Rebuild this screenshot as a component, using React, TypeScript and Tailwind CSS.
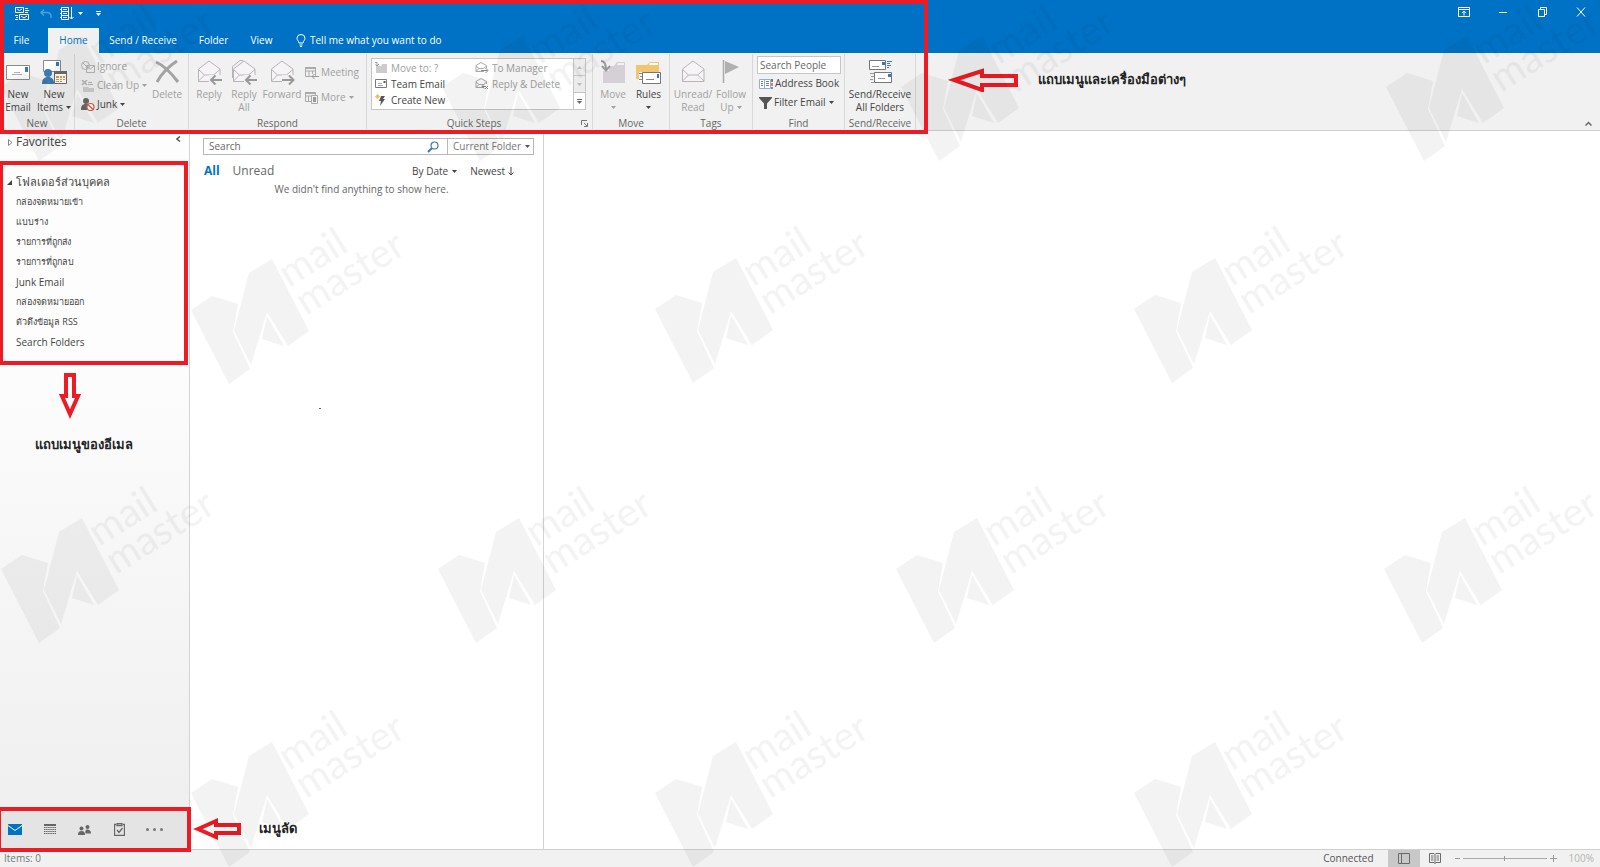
import React from "react";

const GRAY = "#b4b4b4";
const DARK = "#6a6a6a";
const BLUE = "#3c78b4";

/* ---------- icons ---------- */

const Caret = ({ className = "" }: { className?: string }) => (
  <svg viewBox="0 0 5 3" className={`w-[5px] h-[3px] shrink-0 ${className}`} fill="currentColor">
    <path d="M0 0h5L2.5 3z" />
  </svg>
);

const SendReceiveSmallIcon = () => (
  <svg viewBox="0 0 14 13" className="w-[14px] h-[13px]" fill="none" stroke="#fff">
    <path d="M.5 .5h8v5h-8zM4.5 7.5h9v5h-9z" />
    <path d="M2 2l2.500 1.500 2.500-1.500M6 9l3 2 3-2M10 1.500h3M10 3.500h4M10 5.500h3M0 8.500h3M1 10.500h2M0 12.500h3" />
  </svg>
);

const UndoIcon = () => (
  <svg viewBox="0 0 12 10" className="w-3 h-[10px]" fill="none" stroke="#4f9fdb" strokeWidth="1.500">
    <path d="M4 .5L1 3.500l3 3M1 3.500h6c3 0 4.500 2 4 5.500" />
  </svg>
);

const SendAllIcon = () => (
  <svg viewBox="0 0 14 13" className="w-[14px] h-[13px]" fill="none" stroke="#fff">
    <path d="M1.500 .5h7v12h-7zM1.500 4.500h7M1.500 8.500h7M3 2.500h4M3 6.500h4M3 10.500h4M11.500 0v12M9.500 10l2 2 2-2" />
    <path d="M0 2.500h2M0 6.500h2M0 10.500h2" />
  </svg>
);

const NewEmailIcon = () => (
  <svg viewBox="0 0 25 24" className="w-[25px] h-6">
    <path d="M.5 5.500h23v14h-23z" fill="#fff" stroke="#8a8a8a" />
    <path d="M19 7h3v5h-3z" fill={BLUE} />
    <path d="M6 14.500h10M8 12.500h6" stroke="#b0b0b0" fill="none" />
  </svg>
);

const NewItemsIcon = () => (
  <svg viewBox="0 0 25 24" className="w-[25px] h-6">
    <path d="M1.500 .5h17v11h-17z" fill="#fff" stroke="#8a8a8a" />
    <path d="M14 2h3v4h-3z" fill={BLUE} />
    <circle cx="6" cy="13" r="4" fill={BLUE} />
    <path d="M0 24c0-5 2-7 6-7s6 2 6 7z" fill={BLUE} />
    <path d="M12.500 11.500h12v12h-12z" fill="#fff" stroke="#6c6c6c" />
    <path d="M12 11h13v3h-13z" fill="#6c6c6c" />
    <path d="M14 16h3v2h-3zM18 16h2v2h-2zM21 16h2v2h-2zM14 19h3v1h-3zM18 19h2v1h-2zM21 19h2v1h-2zM14 21h3v1h-3zM18 21h2v1h-2z" fill="#e5954e" />
  </svg>
);

const IgnoreIcon = () => (
  <svg viewBox="0 0 14 12" className="w-[14px] h-3" fill="none" stroke={GRAY}>
    <circle cx="4.500" cy="4.500" r="4" />
    <path d="M2 2l5 5M5.500 4.500h8v7h-8zM6 5l3.500 3L13 5" />
  </svg>
);

const CleanUpIcon = () => (
  <svg viewBox="0 0 14 12" className="w-[14px] h-3" fill="none" stroke={GRAY}>
    <path d="M1 0l5 5M6 0L1 5" strokeWidth="1.500" />
    <path d="M2 7h5l1 1h5v4H2z" fill="#cdcbcd" stroke="none" />
    <path d="M7 2.500h4M7 4.500h5" />
  </svg>
);

const JunkIcon = () => (
  <svg viewBox="0 0 14 13" className="w-[14px] h-[13px]">
    <circle cx="5" cy="3" r="3" fill="#666" />
    <path d="M0 12c0-4 1-6 5-6s4 1 4 2L6 12z" fill="#666" />
    <circle cx="9.500" cy="9" r="3.500" fill="#fff" stroke="#d95b43" strokeWidth="1.200" />
    <path d="M7 6.500l5 5" stroke="#d95b43" strokeWidth="1.200" />
  </svg>
);

const DeleteIcon = () => (
  <svg viewBox="0 0 25 24" className="w-[25px] h-6" fill="none" stroke="#a3a3a3" strokeWidth="3">
    <path d="M1 2c9 4 16 12 22 20M22 1C14 6 7 13 2 22" />
  </svg>
);

type EnvelopeProps = { arrow?: "left" | "right"; double?: boolean };

const OpenEnvelopeIcon = ({ arrow, double }: EnvelopeProps) => (
  <svg viewBox="0 0 25 25" className="w-[25px] h-[25px]" fill="none" stroke="#b9b3b9">
    {double && <path d="M.5 18V6.500L8 .5h3" />}
    <path d="M1.500 9L12 1l11 8v12.500H1.500z" fill="#f6f4f6" />
    <path d="M1.500 9.500l6 5.500h9l6.500-5.500M1.500 21l6-6M23 21l-6.500-6" />
    {arrow && <path d="M12 15h13v9H12z" fill="#f1f1f1" stroke="none" />}
    {arrow === "left" && <path d="M25 20H14M18.500 15.500L14 20l4.500 4.500" stroke="#999" strokeWidth="2" />}
    {arrow === "right" && <path d="M12 20h11M19 15.500l4.500 4.500-4.500 4.500" stroke="#999" strokeWidth="2" />}
  </svg>
);

const MeetingIcon = () => (
  <svg viewBox="0 0 14 12" className="w-[14px] h-3" fill="none" stroke="#aaa">
    <path d="M.5 1h10v8.500h-10zM.5 4h10M4 4v5M7.500 4v3" />
    <path d="M0 1h11" strokeWidth="2" />
    <path d="M14 9.500H7M9.500 7L7 9.500 9.500 12" stroke="#999" />
  </svg>
);

const MoreIcon = () => (
  <svg viewBox="0 0 14 12" className="w-[14px] h-3" fill="none" stroke="#aaa">
    <path d="M.5 1h10v8.500h-10zM.5 4h10M3.500 4v5" />
    <path d="M0 1h11" strokeWidth="2" />
    <path d="M6.500 3.500h6v8h-6z" fill="#f1f1f1" />
    <path d="M8 5h3v5H8z" fill="#999" stroke="none" />
  </svg>
);

const MoveToIcon = () => (
  <svg viewBox="0 0 13 12" className="w-[13px] h-3">
    <path d="M1 4h5l1-2h5v9H1z" fill="#cfcccf" />
    <path d="M0 .5h2v3M.5 2.500L2 4l2-2" fill="none" stroke="#999" />
  </svg>
);

const TeamEmailIcon = () => (
  <svg viewBox="0 0 13 12" className="w-[13px] h-3">
    <path d="M.5 1.500h11v8H.5z" fill="#fff" stroke="#7a7a7a" />
    <path d="M8.500 3h2v2h-2z" fill="#555" />
    <path d="M3 5.500h4M3 7.500h5" stroke="#aaa" />
  </svg>
);

const CreateNewIcon = () => (
  <svg viewBox="0 0 13 12" className="w-[13px] h-3">
    <path d="M6 2h4L8 5h2l-5 7 1-5H4z" fill="#555" />
    <path d="M2.500 0v5M0 2.500h5M1 1l3 3M4 1L1 4" stroke="#e8b64c" strokeWidth=".8" />
  </svg>
);

const ReplySmallIcon = ({ x }: { x?: boolean }) => (
  <svg viewBox="0 0 14 12" className="w-[14px] h-3" fill="none" stroke="#aaa">
    <path d="M9 9.500H1v-6L6 .5l5.500 3V6M1 4l3 2.500h4.500L11.500 4M1 9.500l3-3" />
    {x ? (
      <path d="M7 8.500h4M9 6.500l-2 2 2 2M10 8l3 3M13 8l-3 3" stroke="#888" />
    ) : (
      <path d="M6 8.500h6.500M10.500 6l2.500 2.500-2.500 2.500" stroke="#888" />
    )}
  </svg>
);

const MoveIcon = () => (
  <svg viewBox="0 0 25 24" className="w-[25px] h-6">
    <path d="M2 6h11l3-4h8v21H2z" fill="#d5d0d5" />
    <path d="M17 3h6v2h-7z" fill="#f3f1f3" />
    <path d="M0 0h8v11H0z" fill="#f1f1f1" />
    <path d="M0 1c4 0 5 3 5 9M1 6l4 4.500L9 6" fill="none" stroke="#999" strokeWidth="2" />
  </svg>
);

const RulesIcon = () => (
  <svg viewBox="0 0 25 24" className="w-[25px] h-6">
    <path d="M0 5h11l3-3h9v17H0z" fill="#f2c572" />
    <path d="M14 3h8v2h-9z" fill="#fff" />
    <path d="M3 12h4v9H3z" fill="#fff" />
    <path d="M6.500 12.500h18v11h-18z" fill="#fff" stroke="#777" />
    <path d="M21 14h2v4h-2z" fill={BLUE} />
    <path d="M10 19.500h8M3 13.500h3M4 16.500h2M3 19.500h3" stroke="#888" />
  </svg>
);

const FlagIcon = () => (
  <svg viewBox="0 0 18 24" className="w-[18px] h-6">
    <path d="M1.500 0v23" stroke="#aaa" strokeWidth="1.500" />
    <path d="M3 1l14 6-14 7z" fill="#b0b0b0" />
  </svg>
);

const AddressBookIcon = () => (
  <svg viewBox="0 0 14 12" className="w-[14px] h-3" fill="none">
    <path d="M.5 1.500h11v9H.5zM5.500 2v9" fill="#fff" stroke="#8fb0d0" />
    <path d="M2 3.500h2M2 5.500h2M2 7.500h2M7 3.500h3M7 5.500h3M7 7.500h3" stroke="#777" />
    <path d="M13 1v3" stroke="#555" strokeWidth="1.500" />
    <path d="M13 5v3" stroke="#d95b43" strokeWidth="1.500" />
    <path d="M13 9v2" stroke={BLUE} strokeWidth="1.500" />
  </svg>
);

const FilterIcon = () => (
  <svg viewBox="0 0 13 12" className="w-[13px] h-3" fill="#555">
    <path d="M0 0h13v1L8 6.500V12H5V6.500L0 1z" />
  </svg>
);

const SendReceiveIcon = () => (
  <svg viewBox="0 0 25 24" className="w-[25px] h-6">
    <path d="M1.500 .5h16v9h-16zM6.500 12.500h17v10h-17z" fill="#fff" stroke="#777" />
    <path d="M14 2h3v3h-3zM20 14h3v3h-3z" fill={BLUE} />
    <path d="M19 1.500h5M19 3.500h3M19 5.500h4M19 7.500h2" stroke={BLUE} />
    <path d="M4 6.500h7M10 18.500h7M2 13.500h4M3 16.500h3M2 19.500h3M3 22.500h3" stroke="#999" />
  </svg>
);

const BulbIcon = () => (
  <svg viewBox="0 0 10 13" className="w-[10px] h-[13px]" fill="none" stroke="#fff">
    <path d="M3 9C3 7 1 6.500 1 4.300a4 3.800 0 0 1 8 0C9 6.500 7 7 7 9zM3.500 11h3M4 12.500h2" />
  </svg>
);

const MagnifierIcon = () => (
  <svg viewBox="0 0 12 12" className="w-3 h-3" fill="none" stroke="#3c78b4">
    <circle cx="7.500" cy="4.500" r="3.500" strokeWidth="1.200" />
    <path d="M5 7L1 11" strokeWidth="2" />
  </svg>
);

const LauncherIcon = () => (
  <svg viewBox="0 0 7 7" className="w-[7px] h-[7px]" fill="none" stroke="#777">
    <path d="M.5 5V.5H6M3 3l3 3M6.500 3v3.500H3" />
  </svg>
);

/* ---------- ribbon parts ---------- */

type ButtonProps = {
  icon: React.ReactNode;
  label: string;
  disabled?: boolean;
  caret?: boolean;
};

type BigButtonProps = ButtonProps & { line2?: string; className: string };

const BigButton = ({ icon, label, line2, disabled, caret, className }: BigButtonProps) => (
  <button
    className={`flex flex-col items-center shrink-0 pt-[6px] whitespace-nowrap ${className} ${
      disabled ? "text-[#a0a0a0]" : "text-[#444]"
    }`}
  >
    <span className="h-[25px] flex items-start">{icon}</span>
    <span className="mt-[3px] leading-[13px]">{label}</span>
    <span className="flex items-center gap-[3px] h-[13px] leading-[13px]">
      {line2}
      {caret && <Caret />}
    </span>
  </button>
);

const SmallButton = ({ icon, label, disabled, caret }: ButtonProps) => (
  <button
    className={`flex items-center gap-[2px] h-[19px] whitespace-nowrap ${
      disabled ? "text-[#a0a0a0]" : "text-[#444]"
    }`}
  >
    {icon}
    <span>{label}</span>
    {caret && <Caret className="ml-px" />}
  </button>
);

type GroupProps = { title: string; className: string; launcher?: boolean; children: React.ReactNode };

const Group = ({ title, className, launcher, children }: GroupProps) => (
  <section className={`flex flex-col shrink-0 border-r border-[#d8d8d8] my-px ${className}`}>
    <div className="flex-1 flex">{children}</div>
    <div className="h-[11px] flex items-center text-[#666]">
      <span className="flex-1 text-center leading-[11px]">{title}</span>
      {launcher && (
        <button aria-label="Quick Steps options" className="mr-1">
          <LauncherIcon />
        </button>
      )}
    </div>
  </section>
);

const quickSteps = [
  { label: "Move to: ?", icon: <MoveToIcon />, disabled: true },
  { label: "To Manager", icon: <ReplySmallIcon />, disabled: true },
  { label: "Team Email", icon: <TeamEmailIcon />, disabled: false },
  { label: "Reply & Delete", icon: <ReplySmallIcon x />, disabled: true },
  { label: "Create New", icon: <CreateNewIcon />, disabled: false },
];

const Note = ({ children }: { children: React.ReactNode }) => (
  <span className="text-[13px] leading-6 font-bold text-[#222] whitespace-nowrap font-['Liberation_Serif',serif]">
    {children}
  </span>
);

const Ribbon = () => (
  <div className="flex h-[78px] bg-[#f1f1f1] border-b border-[#cfcfcf] text-[10px]">
    <Group title="New" className="w-[75px]">
      <BigButton icon={<NewEmailIcon />} label="New" line2="Email" className="w-9" />
      <BigButton icon={<NewItemsIcon />} label="New" line2="Items" caret className="w-9" />
    </Group>
    <Group title="Delete" className="w-[114px]">
      <div className="flex flex-col pl-[6px] pt-[3px] w-[75px]">
        <SmallButton icon={<IgnoreIcon />} label="Ignore" disabled />
        <SmallButton icon={<CleanUpIcon />} label="Clean Up" disabled caret />
        <SmallButton icon={<JunkIcon />} label="Junk" caret />
      </div>
      <BigButton icon={<DeleteIcon />} label="Delete" disabled className="w-[34px]" />
    </Group>
    <Group title="Respond" className="w-[178px]">
      <BigButton icon={<OpenEnvelopeIcon arrow="left" />} label="Reply" disabled className="w-10" />
      <BigButton icon={<OpenEnvelopeIcon arrow="left" double />} label="Reply" line2="All" disabled className="w-[30px]" />
      <BigButton icon={<OpenEnvelopeIcon arrow="right" />} label="Forward" disabled className="w-[46px]" />
      <div className="flex flex-col gap-[6px] pt-[9px]">
        <SmallButton icon={<MeetingIcon />} label="Meeting" disabled />
        <SmallButton icon={<MoreIcon />} label="More" disabled caret />
      </div>
    </Group>
    <Group title="Quick Steps" className="w-[226px]" launcher>
      <div className="flex w-[215px] h-[52px] mt-1 ml-1 bg-white border border-[#c6c6c6]">
        <div className="flex-1 grid grid-cols-[100px_1fr] content-center pl-[3px]">
          {quickSteps.map((step) => (
            <button
              key={step.label}
              className={`flex items-center gap-[3px] h-4 whitespace-nowrap ${
                step.disabled ? "text-[#a0a0a0]" : "text-[#444]"
              }`}
            >
              {step.icon}
              {step.label}
            </button>
          ))}
        </div>
        <div className="w-3 flex flex-col border-l border-[#c6c6c6] text-[#bbb]">
          <button aria-label="Scroll up" className="flex-1 flex items-center justify-center bg-[#ececec] border-b border-[#c6c6c6]">
            <Caret className="rotate-180" />
          </button>
          <button aria-label="Scroll down" className="flex-1 flex items-center justify-center bg-[#ececec] border-b border-[#c6c6c6]">
            <Caret />
          </button>
          <button aria-label="More quick steps" className="flex-1 flex flex-col gap-px items-center justify-center text-[#666]">
            <span className="w-[5px] h-px bg-[#666]" />
            <Caret />
          </button>
        </div>
      </div>
    </Group>
    <Group title="Move" className="w-[77px]">
      <BigButton icon={<MoveIcon />} label="Move" disabled caret className="w-10" />
      <BigButton icon={<RulesIcon />} label="Rules" caret className="w-[31px]" />
    </Group>
    <Group title="Tags" className="w-[83px]">
      <BigButton icon={<OpenEnvelopeIcon />} label="Unread/" line2="Read" disabled className="w-[46px]" />
      <BigButton icon={<FlagIcon />} label="Follow" line2="Up" disabled caret className="w-[30px]" />
    </Group>
    <Group title="Find" className="w-[92px]">
      <div className="flex flex-col pl-1 pt-[2px]">
        <input
          type="text"
          aria-label="Search People"
          placeholder="Search People"
          className="w-[84px] h-[18px] px-[2px] bg-white border border-[#c6c6c6] placeholder:text-[#666]"
        />
        <div className="flex flex-col pl-[2px]">
          <SmallButton icon={<AddressBookIcon />} label="Address Book" />
          <SmallButton icon={<FilterIcon />} label="Filter Email" caret />
        </div>
      </div>
    </Group>
    <Group title="Send/Receive" className="w-[71px]">
      <BigButton icon={<SendReceiveIcon />} label="Send/Receive" line2="All Folders" className="w-[70px]" />
    </Group>
    <div className="flex items-center gap-5 pl-8 pb-6">
      <svg viewBox="0 0 70 24" className="w-[70px] h-6" fill="none" stroke="#ed1c24" strokeWidth="4">
        <path d="M6 12L34 3v5h34v9H34v5z" />
      </svg>
      <Note>แถบเมนูและเครื่องมือต่างๆ</Note>
    </div>
    <button aria-label="Collapse the ribbon" className="self-end ml-auto mr-2 mb-1 text-[#666]">
      <svg viewBox="0 0 7 5" className="w-[7px] h-[5px]" fill="none" stroke="currentColor" strokeWidth="1.500">
        <path d="M.5 4.500l3-3 3 3" />
      </svg>
    </button>
  </div>
);

const TitleBar = () => (
  <header className="bg-[#0072c6] text-white text-[10px]">
    <div className="flex items-start h-7">
      <div className="flex items-center h-[27px] pl-[15px]">
        <button aria-label="Send/Receive All Folders"><SendReceiveSmallIcon /></button>
        <button aria-label="Undo" className="ml-[11px]"><UndoIcon /></button>
        <button aria-label="Send All" className="ml-2 flex items-center gap-1">
          <SendAllIcon />
          <Caret />
        </button>
        <button aria-label="Customize Quick Access Toolbar" className="ml-[13px] flex flex-col gap-px">
          <span className="w-[5px] h-px bg-white" />
          <Caret />
        </button>
      </div>
      <div className="flex items-center h-6 ml-auto pr-[13px] gap-[27px]">
        <button aria-label="Ribbon display options">
          <svg viewBox="0 0 12 10" className="w-3 h-[10px]" fill="none" stroke="#fff">
            <path d="M.5 .5h11v9H.5zM.5 2.500h11M6 8.500V4M4 6l2-2 2 2" />
          </svg>
        </button>
        <button aria-label="Minimize">
          <svg viewBox="0 0 12 10" className="w-3 h-[10px]" stroke="#fff">
            <path d="M2 5.500h8" />
          </svg>
        </button>
        <button aria-label="Restore">
          <svg viewBox="0 0 12 10" className="w-3 h-[10px]" fill="none" stroke="#fff">
            <path d="M2.500 2.500h6v7h-6zM4.500 2.500v-2h6v7h-2" />
          </svg>
        </button>
        <button aria-label="Close">
          <svg viewBox="0 0 12 10" className="w-3 h-[10px]" stroke="#fff">
            <path d="M2 .5l8 9M10 .5l-8 9" />
          </svg>
        </button>
      </div>
    </div>
    <nav className="flex h-[25px] whitespace-nowrap">
      <button className="w-[48px] pr-[5px]">File</button>
      <button className="w-[51px] bg-[#f1f1f1] text-[#0072c6]">Home</button>
      <button className="w-[88px]">Send / Receive</button>
      <button className="w-[53px]">Folder</button>
      <button className="w-[43px]">View</button>
      <button className="flex items-center gap-1 pl-[13px]">
        <BulbIcon />
        Tell me what you want to do
      </button>
    </nav>
  </header>
);

/* ---------- panes ---------- */

const folders = [
  { name: "กล่องจดหมายเข้า", thai: true },
  { name: "แบบร่าง", thai: true },
  { name: "รายการที่ถูกส่ง", thai: true },
  { name: "รายการที่ถูกลบ", thai: true },
  { name: "Junk Email", thai: false },
  { name: "กล่องจดหมายออก", thai: true },
  { name: "ตัวดึงข้อมูล RSS", thai: true },
  { name: "Search Folders", thai: false },
];

const Sidebar = () => (
  <aside className="w-[190px] shrink-0 flex flex-col border-r border-[#d4d4d4] bg-linear-to-b from-[#fdfdfd] from-30% to-[#eeeeee] text-[#444]">
    <div className="flex items-center h-6 pl-2 pr-2">
      <button className="flex items-center gap-[3px] pb-[2px] text-[12px] leading-5">
        <svg viewBox="0 0 5 7" className="w-[5px] h-[7px]" fill="none" stroke="#888">
          <path d="M.5 .5L4 3.500.5 6.500z" />
        </svg>
        Favorites
      </button>
      <button aria-label="Minimize the folder pane" className="ml-auto mb-2">
        <svg viewBox="0 0 5 6" className="w-[5px] h-[6px]" fill="none" stroke="#555" strokeWidth="1.500">
          <path d="M4 .5L1 3l3 2.500" />
        </svg>
      </button>
    </div>
    <div className="mt-[6px] w-[188px] h-[204px] pt-[7px] pl-1 border-4 border-l-[3px] border-[#ed1c24]">
      <button className="flex items-center gap-1 h-5 text-[11px] leading-5 whitespace-nowrap">
        <svg viewBox="0 0 5 5" className="w-[5px] h-[5px]" fill="#444">
          <path d="M5 0v5H0z" />
        </svg>
        โฟลเดอร์ส่วนบุคคล
      </button>
      <ul className="pl-[9px]">
        {folders.map(({ name, thai }) => (
          <li key={name}>
            <button className={`block h-5 leading-5 whitespace-nowrap ${thai ? "text-[9px]" : "text-[10px]"}`}>
              {name}
            </button>
          </li>
        ))}
      </ul>
    </div>
    <div className="flex flex-col items-center w-[168px] pt-2">
      <svg viewBox="0 0 22 46" className="w-[22px] h-[46px] mr-[28px]" fill="none" stroke="#ed1c24" strokeWidth="4">
        <path d="M7 2h8v21h4l-8 18-8-18h4z" />
      </svg>
      <div className="mt-3">
        <Note>แถบเมนูของอีเมล</Note>
      </div>
    </div>
    <nav className="mt-auto relative z-10 -mb-[3px] w-[191px] h-[45px] flex items-center border-4 border-l border-[#ed1c24] bg-[#e4e4e4] text-[#666]">
      <button aria-label="Mail" className="w-7 h-full flex items-center justify-center">
        <svg viewBox="0 0 14 11" className="w-[14px] h-[11px]">
          <path d="M0 0h14v11H0z" fill="#0072c6" />
          <path d="M0 1.500l7 5 7-5" fill="none" stroke="#fff" />
        </svg>
      </button>
      <button aria-label="Calendar" className="w-[41px] flex justify-center">
        <svg viewBox="0 0 12 11" className="w-3 h-[11px]" stroke="currentColor" fill="none">
          <path d="M0 1h12" strokeWidth="2" />
          <path d="M0 3.500h12M0 5.500h12M0 7.500h12M0 9.500h12" strokeDasharray="1.500 .6" />
        </svg>
      </button>
      <button aria-label="People" className="w-[29px] flex justify-center">
        <svg viewBox="0 0 13 10" className="w-[13px] h-[10px]" fill="currentColor">
          <circle cx="3.500" cy="3.500" r="2" />
          <path d="M0 10c0-3 1-4 3.500-4S7 7 7 10z" />
          <circle cx="9.500" cy="2" r="2" />
          <path d="M7.500 8.500C7 5 8 4.500 9.500 4.500S13 5.500 13 8.500z" />
        </svg>
      </button>
      <button aria-label="Tasks" className="w-[41px] flex justify-center">
        <svg viewBox="0 0 11 13" className="w-[11px] h-[13px]" fill="none" stroke="currentColor">
          <path d="M2 1.500H.5v11h10v-11H9M3 .5h5v2H3zM3 7l2 2.500L8.500 5" strokeWidth="1.300" />
        </svg>
      </button>
      <button aria-label="More" className="w-[29px] flex justify-center gap-1">
        <span className="size-[3px] rounded-full bg-[#777]" />
        <span className="size-[3px] rounded-full bg-[#777]" />
        <span className="size-[3px] rounded-full bg-[#777]" />
      </button>
    </nav>
  </aside>
);

const MessageList = () => (
  <section className="w-[354px] shrink-0 flex flex-col border-r border-[#d4d4d4] text-[10px] text-[#555]">
    <div className="flex items-center h-[17px] mt-[7px] ml-[13px] mr-[9px] border border-[#b8b8b8]">
      <input
        type="text"
        aria-label="Search"
        placeholder="Search"
        className="flex-1 min-w-0 px-[5px] placeholder:text-[#666]"
      />
      <button aria-label="Start search" className="mr-2">
        <MagnifierIcon />
      </button>
      <div className="relative flex items-center h-full border-l border-[#b8b8b8]">
        <select aria-label="Search scope" className="appearance-none w-[85px] pl-[5px] text-[#777]">
          <option>Current Folder</option>
        </select>
        <Caret className="absolute right-[3px] pointer-events-none" />
      </div>
    </div>
    <div className="flex items-center h-5 mt-[6px] ml-[14px] mr-[29px]">
      <button className="text-[12px] font-bold text-[#0072c6]">All</button>
      <button className="ml-[13px] text-[12px] text-[#666]">Unread</button>
      <button className="ml-auto flex items-center gap-1 text-[#444]">
        By Date
        <Caret />
      </button>
      <button className="ml-[13px] flex items-center gap-[3px] text-[#444]">
        Newest
        <svg viewBox="0 0 6 9" className="w-[6px] h-[9px]" fill="none" stroke="currentColor">
          <path d="M3 0v8M.5 5.500L3 8l2.500-2.500" />
        </svg>
      </button>
    </div>
    <p className="pl-[10px] pr-[20px] text-center leading-4 text-[#666]">
      We didn't find anything to show here.
    </p>
    <span className="mt-[211px] ml-[129px] w-[2px] h-px bg-[#666]" />
    <div className="mt-auto mb-2 ml-[3px] flex items-center gap-[18px]">
      <svg viewBox="0 0 48 24" className="w-12 h-6" fill="none" stroke="#ed1c24" strokeWidth="4">
        <path d="M5 12L23 4v4h23v8H23v4z" />
      </svg>
      <Note>เมนูลัด</Note>
    </div>
  </section>
);

const StatusBar = () => (
  <footer className="flex items-center h-[18px] bg-[#f1f1f1] border-t border-[#cfcfcf] text-[10px] text-[#555]">
    <span className="pl-1 text-[#777]">Items: 0</span>
    <span className="ml-auto mr-[14px]">Connected</span>
    <button aria-label="Normal view" className="w-8 h-full flex items-center justify-center bg-[#c8c8c8]">
      <svg viewBox="0 0 12 11" className="w-3 h-[11px]" fill="none" stroke={DARK}>
        <path d="M.5 .5h11v10H.5zM3.500 .5v10" />
      </svg>
    </button>
    <button aria-label="Reading view" className="w-[31px] flex justify-center">
      <svg viewBox="0 0 12 11" className="w-3 h-[11px]" fill="none" stroke={DARK}>
        <path d="M6 1.500L5 .5H.5v9H5l1 1 1-1h4.500v-9H7zM6 1.500v9M2 3h2.500M2 5h2.500M2 7h2.500M7.500 3H10M7.500 5H10M7.500 7H10" />
      </svg>
    </button>
    <button aria-label="Zoom out" className="ml-1 w-[5px] h-px bg-[#999]" />
    <input
      type="range"
      aria-label="Zoom"
      className="appearance-none w-[84px] h-px mx-[3px] bg-[#aaa] [&::-webkit-slider-thumb]:appearance-none [&::-webkit-slider-thumb]:w-px [&::-webkit-slider-thumb]:h-[5px] [&::-webkit-slider-thumb]:bg-[#999]"
    />
    <button aria-label="Zoom in">
      <svg viewBox="0 0 7 7" className="w-[7px] h-[7px]" stroke="#999">
        <path d="M0 3.500h7M3.500 0v7" />
      </svg>
    </button>
    <span className="ml-3 mr-[6px] text-[#b4b4b4]">100%</span>
  </footer>
);

/* ---------- watermark ---------- */

const marks = [
  [-14, -22], [427, -22], [886, -22], [1371, -22],
  [176, 201], [640, 200], [1119, 200],
  [-14, 460], [423, 460], [881, 460], [1369, 460],
  [176, 684], [640, 684], [1119, 684],
];

const Watermark = () => (
  <div className="absolute inset-0 z-20 overflow-hidden pointer-events-none">
    {marks.map(([left, top]) => (
      <svg
        key={`${left},${top}`}
        viewBox="0 0 250 190"
        className="absolute w-[250px] h-[190px] fill-black opacity-[0.045]"
        style={{ left, top }}
      >
        <path d="M15 109l21-14 26 8-5 28 17 37-21 15z" />
        <path d="M73 72l23-14 37 72-21 15-21-34-16 53-17-34z" />
        <path d="M91 115l17 30-22-7z" />
        <g className="font-['Lato']" fontSize="40">
          <text transform="translate(113 87) rotate(-32)">mail</text>
          <text transform="translate(130 115) rotate(-32)">master</text>
        </g>
      </svg>
    ))}
  </div>
);

export default function App() {
  return (
    <div className="relative min-h-screen flex flex-col overflow-hidden bg-white font-['Open_Sans','Noto_Sans',sans-serif]">
      <TitleBar />
      <Ribbon />
      <main className="flex-1 flex">
        <Sidebar />
        <MessageList />
        <section aria-label="Reading pane" className="flex-1" />
      </main>
      <StatusBar />
      <Watermark />
      {/* callout frame around the title bar and ribbon */}
      <div className="absolute left-0 top-0 z-30 w-[928px] h-[134px] border-4 border-[#ed1c24] pointer-events-none" />
    </div>
  );
}
